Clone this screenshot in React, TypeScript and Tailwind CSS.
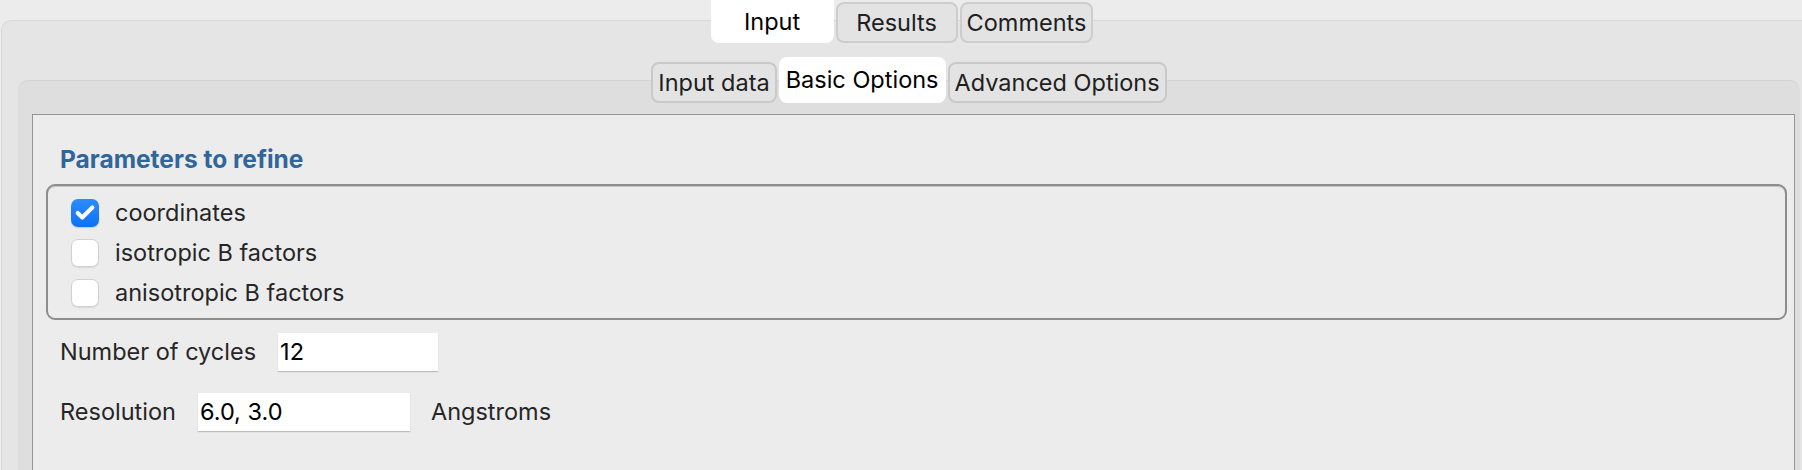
import { Check } from "lucide-react";

const topTabs = [
  { label: "Input", active: true },
  { label: "Results", active: false },
  { label: "Comments", active: false },
];

const subTabs = [
  { label: "Input data", active: false },
  { label: "Basic Options", active: true },
  { label: "Advanced Options", active: false },
];

const params = [
  { label: "coordinates", checked: true },
  { label: "isotropic B factors", checked: false },
  { label: "anisotropic B factors", checked: false },
];

function Checkbox({ checked }: { checked: boolean }) {
  if (checked) {
    return (
      <span className="flex h-[28px] w-[28px] items-center justify-center rounded-[7px] bg-gradient-to-b from-[#2b8cfd] to-[#0a72f5] shadow-[0_1px_1px_rgba(0,0,0,0.15)]">
        <Check size={22} strokeWidth={4.5} className="text-white" aria-hidden="true" />
      </span>
    );
  }
  return (
    <span className="h-[28px] w-[28px] rounded-[7px] border border-[#d2d2d2] bg-white shadow-[0_1px_1px_rgba(0,0,0,0.08)]" />
  );
}

export default function App() {
  return (
    <div
      className="h-[470px] w-[1802px] overflow-hidden bg-[#ececec] text-[23.5px] text-[#262626]"
      style={{ fontFamily: "Inter, 'Noto Sans', sans-serif" }}
    >
      {/* main tab bar */}
      <div className="relative z-10 flex h-[43px] items-end justify-center gap-[2px] pl-[2px]">
        {topTabs.map((tab) =>
          tab.active ? (
            <div
              key={tab.label}
              className="flex h-[43px] min-w-[123px] items-center justify-center rounded-b-[8px] bg-white px-[6px] text-black"
            >
              {tab.label}
            </div>
          ) : (
            <div
              key={tab.label}
              className="flex h-[41px] min-w-[122px] items-center justify-center rounded-[8px] border-2 border-[#cdcdcd] bg-[#e3e3e3] px-[5px] text-[#202020]"
            >
              {tab.label}
            </div>
          )
        )}
      </div>

      {/* outer panel */}
      <div className="-mt-[23px] ml-[1px] rounded-tl-[10px] border-l border-t border-[#d9d9d9] bg-[#e5e5e5] pl-[16px] pr-[2px] pt-[36px]">
        {/* sub tab bar */}
        <div className="relative z-10 flex h-[46px] items-end justify-center gap-[2px]">
          {subTabs.map((tab) =>
            tab.active ? (
              <div
                key={tab.label}
                className="flex h-[46px] items-center justify-center rounded-[8px] bg-white px-[7px] text-black"
              >
                {tab.label}
              </div>
            ) : (
              <div
                key={tab.label}
                className="flex h-[41px] items-center justify-center rounded-[8px] border-2 border-[#c9c9c9] bg-[#e3e3e3] px-[5px] text-[#202020]"
              >
                {tab.label}
              </div>
            )
          )}
        </div>

        {/* inner panel */}
        <div className="-mt-[23px] h-[420px] rounded-t-[10px] border-t border-[#d4d4d4] bg-[#dedede] pl-[14px] pr-[5px] pt-[33px]">
          <div className="h-full border-l border-r border-t border-[#959595] bg-[#ececec] pl-[13px] pr-[7px] pt-[30px]">
            <h2 className="pl-[14px] text-[24.5px] font-bold leading-[28px] text-[#31669b]">Parameters to refine</h2>

            <div className="mt-[11px] rounded-[9px] border-2 border-[#8d8d8d] pb-[5px] pl-[23px] pt-[7px] shadow-[inset_0_1px_0_#c4c4c4]">
              {params.map((p) => (
                <label key={p.label} className="flex h-[40px] items-center gap-[16px]">
                  <Checkbox checked={p.checked} />
                  <span>{p.label}</span>
                </label>
              ))}
            </div>

            <div className="mt-[13px] flex items-center gap-[22px] pl-[14px]">
              <span>Number of cycles</span>
              <div className="flex h-[38px] w-[160px] items-center bg-white pl-[2px] text-black shadow-[0_1px_1px_rgba(0,0,0,0.2)]">
                12
              </div>
            </div>

            <div className="mt-[22px] flex items-center pl-[14px]">
              <span>Resolution</span>
              <div className="ml-[22px] flex h-[38px] w-[212px] items-center bg-white pl-[2px] text-black shadow-[0_1px_1px_rgba(0,0,0,0.2)]">
                6.0, 3.0
              </div>
              <span className="ml-[21px]">Angstroms</span>
            </div>
          </div>
        </div>
      </div>
    </div>
  );
}
